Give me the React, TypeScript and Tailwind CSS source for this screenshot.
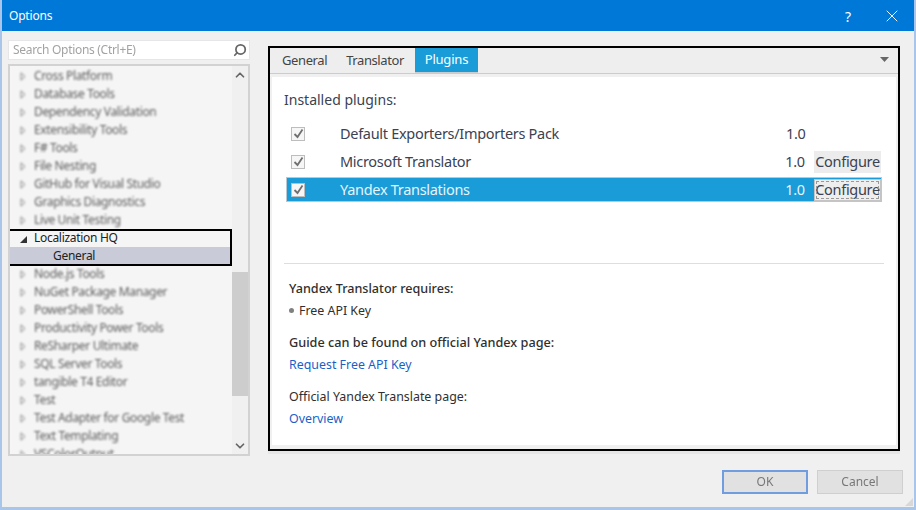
import { X, Search, ChevronUp, ChevronDown } from "lucide-react";

const before = ["Cross Platform", "Database Tools", "Dependency Validation", "Extensibility Tools", "F# Tools", "File Nesting", "GitHub for Visual Studio", "Graphics Diagnostics", "Live Unit Testing"];
const after = ["Node.js Tools", "NuGet Package Manager", "PowerShell Tools", "Productivity Power Tools", "ReSharper Ultimate", "SQL Server Tools", "tangible T4 Editor", "Test", "Test Adapter for Google Test", "Text Templating", "VSColorOutput"];

function TreeRow({ label }: { label: string }) {
  return (
    <div className="flex h-[18px] shrink-0 items-center pl-[10px] blur-[0.8px]">
      <svg width="6" height="9" viewBox="0 0 6 9" className="shrink-0">
        <path d="M1 .8 5 4.5 1 8.2Z" fill="none" stroke="#8a8a8a" />
      </svg>
      <span className="ml-[8px] whitespace-nowrap text-[12px] tracking-[-0.35px] text-[#5c5c5c]">{label}</span>
    </div>
  );
}

function Check() {
  return (
    <div className="flex h-[14px] w-[14px] shrink-0 items-center justify-center border border-[#bdbdbd] bg-[#f6f6f6]">
      <svg width="11" height="11" viewBox="0 0 11 11">
        <path d="M1.5 6 4.5 9l5-7.5" fill="none" stroke="#707070" strokeWidth="1.8" />
      </svg>
    </div>
  );
}

function PluginRow({ name, configure, selected }: { name: string; configure?: boolean; selected?: boolean }) {
  return (
    <div className={`flex h-[23px] items-center pl-[4px] text-[14.5px] tracking-[-0.3px] ${selected ? "bg-[#1a9cd8] text-[#e6f4fb] outline outline-[#b9c9d4]" : "text-[#3b4252]"}`}>
      <Check />
      <span className="ml-[35px] w-[446px] whitespace-nowrap">{name}</span>
      <span className="w-[29px]">1.0</span>
      {configure && (
        <span className={`flex h-[22px] w-[67px] items-center justify-center text-[#3b4252] ${selected ? "border border-[#c4c4c4] bg-[#eeeeee] outline-1 -outline-offset-3 outline-dashed outline-[#999]" : "bg-[#ececec]"}`}>
          Configure
        </span>
      )}
    </div>
  );
}

export default function App() {
  return (
    <div className="flex h-[510px] w-[916px] flex-col overflow-hidden border-x-2 border-b-[3px] border-x-[#a9c5ea] border-b-[#a9c5ea] bg-[#f0f0f0] font-['Noto_Sans',sans-serif]">
      {/* Title bar */}
      <div className="-mx-[2px] flex h-[31px] shrink-0 items-center bg-[#0078d7] pl-[9px] pt-[1px] text-[12px] tracking-[-0.2px] text-white">
        <span>Options</span>
        <span className="ml-auto mr-[31px] text-[14px]">?</span>
        <X size={20} strokeWidth={1.1} className="mr-[14px]" />
      </div>

      <div className="flex min-h-0 flex-1">
        {/* Left column */}
        <div className="ml-[6px] mt-[9px] w-[242px] shrink-0">
          <div className="flex h-[20px] items-center justify-between border border-[#e6e6ea] bg-white pl-[4px] pr-[2px] blur-[0.7px]">
            <span className="text-[12px] tracking-[-0.3px] text-[#a3a3a3]">Search Options (Ctrl+E)</span>
            <Search size={14} strokeWidth={3} color="#666666" className="-scale-x-100" />
          </div>
          <div className="mt-[4px] flex h-[392px] overflow-hidden border-2 border-[#d2d2d2] bg-[#f5f5f5]">
            <div className="flex w-[222px] shrink-0 flex-col overflow-hidden pt-[1px]">
              {before.map((l) => <TreeRow key={l} label={l} />)}
              <div className="relative -mb-px -ml-[2px] shrink-0 border-2 border-black">
                <div className="flex h-[16px] items-center pl-[10px]">
                  <svg width="7" height="7" viewBox="0 0 7 7" className="shrink-0"><path d="M7 0V7H0Z" fill="#333" /></svg>
                  <span className="ml-[7px] -translate-y-px text-[12px] tracking-[-0.3px] text-[#222]">Localization HQ</span>
                </div>
                <div className="flex h-[17px] items-center bg-[#c9cbd9] pl-[43px] text-[12px] tracking-[-0.3px] text-[#222]">General</div>
              </div>
              {after.map((l) => <TreeRow key={l} label={l} />)}
            </div>
            <div className="flex w-[16px] flex-col items-center bg-[#f0f0f0] pt-[2px] blur-[0.5px]">
              <ChevronUp size={14} strokeWidth={3} color="#666" />
              <div className="mt-[190px] h-[124px] w-full bg-[#cdcdcd]" />
              <ChevronDown size={14} strokeWidth={3} color="#666" className="mt-[43px]" />
            </div>
          </div>
        </div>

        {/* Right panel */}
        <div className="ml-[18px] mt-[15px] flex h-[405px] w-[632px] flex-col border-2 border-black shadow-[0_3px_0_#e6e6e6]">
          <div className="flex h-[26px] shrink-0 items-stretch border-b border-[#cccccc] bg-[#eeeeee] text-[13px] tracking-[-0.4px] text-[#444]">
            <span className="ml-[12px] flex items-center">General</span>
            <span className="ml-[19px] flex items-center">Translator</span>
            <span className="ml-[11px] flex w-[63px] items-center justify-center border-b border-[#cccccc] bg-[#1a9cd8] tracking-[-0.2px] text-white">Plugins</span>
            <svg width="10" height="6" viewBox="0 0 10 6" className="ml-auto mr-[8px] mt-[9px]"><path d="M0 0H9L4.5 5Z" fill="#666" /></svg>
          </div>
          <div className="mx-[2px] mt-[3px] flex h-[368px] flex-col bg-white pl-[12px] pr-[12px]">
            <div className="mt-[13px] text-[14px] leading-[19px] text-[#3b4252]">Installed plugins:</div>
            <div className="ml-[3px] mr-[3px] mt-[13px] flex flex-col gap-[5px]">
              <PluginRow name="Default Exporters/Importers Pack" />
              <PluginRow name="Microsoft Translator" configure />
              <PluginRow name="Yandex Translations" configure selected />
            </div>
            <div className="mt-[62px] h-px bg-[#dedede]" />
            <div className="ml-[5px] text-[12.4px] text-[#2f2f2f]">
              <div className="mt-[16px] text-[12.6px] font-medium leading-[17px]">Yandex Translator requires:</div>
              <div className="mt-[5px] flex items-center leading-[17px]">
                <span className="mr-[5px] h-[5px] w-[5px] rounded-full bg-[#808080]" />Free API Key
              </div>
              <div className="mt-[15px] text-[12.7px] font-medium leading-[17px]">Guide can be found on official Yandex page:</div>
              <a className="mt-[5px] block leading-[17px] text-[#1a5fc8]">Request Free API Key</a>
              <div className="mt-[15px] leading-[17px]">Official Yandex Translate page:</div>
              <a className="mt-[5px] block leading-[17px] text-[#1a5fc8]">Overview</a>
            </div>
          </div>
        </div>
      </div>

      {/* Footer buttons */}
      <div className="relative flex h-[37px] shrink-0 items-start justify-end pr-[11px] text-[12px] text-[#777]">
        <button className="flex h-[24px] w-[86px] items-center justify-center border-2 border-[#6f9ddf] bg-[#e1e1e1] blur-[0.7px]">OK</button>
        <button className="ml-[9px] flex h-[24px] w-[86px] items-center justify-center border border-[#cfcfcf] bg-[#e1e1e1] blur-[0.7px]">Cancel</button>
        <svg width="10" height="10" viewBox="0 0 10 10" className="absolute bottom-0 right-0"><path d="M9 1V9H1Z" fill="#d8d8d8" /></svg>
      </div>
    </div>
  );
}
